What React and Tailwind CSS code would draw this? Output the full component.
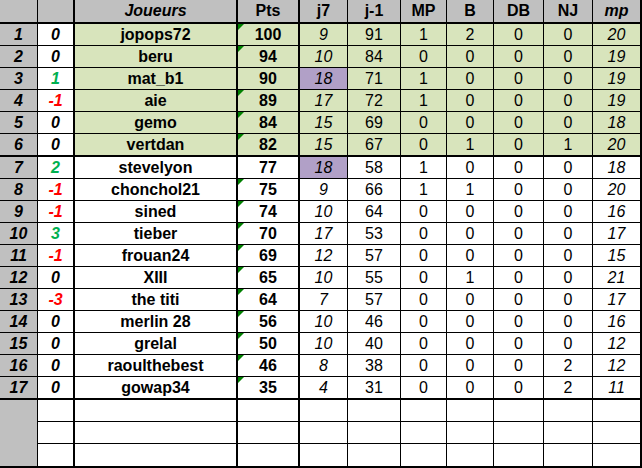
const rows = [
  [1, 0, "jopops72", 100, 9, 91, 1, 2, 0, 0, 20],
  [2, 0, "beru", 94, 10, 84, 0, 0, 0, 0, 19],
  [3, 1, "mat_b1", 90, 18, 71, 1, 0, 0, 0, 19],
  [4, -1, "aie", 89, 17, 72, 1, 0, 0, 0, 19],
  [5, 0, "gemo", 84, 15, 69, 0, 0, 0, 0, 18],
  [6, 0, "vertdan", 82, 15, 67, 0, 1, 0, 1, 20],
  [7, 2, "stevelyon", 77, 18, 58, 1, 0, 0, 0, 18],
  [8, -1, "chonchol21", 75, 9, 66, 1, 1, 0, 0, 20],
  [9, -1, "sined", 74, 10, 64, 0, 0, 0, 0, 16],
  [10, 3, "tieber", 70, 17, 53, 0, 0, 0, 0, 17],
  [11, -1, "frouan24", 69, 12, 57, 0, 0, 0, 0, 15],
  [12, 0, "XIII", 65, 10, 55, 0, 1, 0, 0, 21],
  [13, -3, "the titi", 64, 7, 57, 0, 0, 0, 0, 17],
  [14, 0, "merlin 28", 56, 10, 46, 0, 0, 0, 0, 16],
  [15, 0, "grelal", 50, 10, 40, 0, 0, 0, 0, 12],
  [16, 0, "raoulthebest", 46, 8, 38, 0, 0, 0, 2, 12],
  [17, 0, "gowap34", 35, 4, 31, 0, 0, 0, 2, 11],
];

// column widths include the right border
const cols = [
  "w-[38px] border-r",
  "w-[37px] border-r-2",
  "w-[163px] border-r-2",
  "w-[62px] border-r-2",
  "w-[48px] border-r",
  "w-[53px] border-r",
  "w-[46px] border-r",
  "w-[47px] border-r",
  "w-[50px] border-r",
  "w-[49px] border-r",
  "w-[49px] border-r-2",
];

const noFlag = [3, 7];
const purple = [3, 7];

function Cell({ i, className = "", children }) {
  return (
    <div className={`${cols[i]} relative flex shrink-0 items-center justify-center border-black ${className}`}>
      {children}
    </div>
  );
}

function rowHeight(n) {
  if (n === 6 || n === 17) return "h-[23px] border-b-2";
  return "h-[22px] border-b";
}

function moveColor(v) {
  if (v > 0) return "text-[#00b050]";
  if (v < 0) return "text-[#ff0000]";
  return "text-black";
}

export default function App() {
  return (
    <div className="w-[642px] h-[468px] overflow-hidden bg-white text-[16px] leading-none text-black" style={{ fontFamily: '"Liberation Sans", Arial, sans-serif' }}>
      <div className="flex h-[24px] border-b-2 border-black bg-[#c0c0c0] font-bold">
        <Cell i={0} />
        <Cell i={1} />
        <Cell i={2} className="italic">Joueurs</Cell>
        <Cell i={3}>Pts</Cell>
        <Cell i={4}>j7</Cell>
        <Cell i={5}>j-1</Cell>
        <Cell i={6}>MP</Cell>
        <Cell i={7}>B</Cell>
        <Cell i={8}>DB</Cell>
        <Cell i={9}>NJ</Cell>
        <Cell i={10} className="italic">mp</Cell>
      </div>

      {rows.map((r) => {
        const [n, mv, name, pts, j7, j1, mp, b, db, nj, mpp] = r;
        const fill = n <= 6 ? "bg-[#d8e4bc]" : "bg-white";
        return (
          <div key={n} className={`flex border-black ${rowHeight(n)}`}>
            <Cell i={0} className="bg-[#c0c0c0] font-bold italic">{n}</Cell>
            <Cell i={1} className={`bg-white font-bold italic ${moveColor(mv)}`}>{mv}</Cell>
            <Cell i={2} className={`${fill} font-bold`}>{name}</Cell>
            <Cell i={3} className={`${fill} font-bold`}>
              {!noFlag.includes(n) && (
                <span className="absolute left-0 top-0 h-0 w-0 border-t-[6px] border-r-[6px] border-t-[#008000] border-r-transparent" />
              )}
              {pts}
            </Cell>
            <Cell i={4} className={`${purple.includes(n) ? "bg-[#b1a0c7]" : fill} italic`}>{j7}</Cell>
            <Cell i={5} className={fill}>{j1}</Cell>
            <Cell i={6} className={fill}>{mp}</Cell>
            <Cell i={7} className={fill}>{b}</Cell>
            <Cell i={8} className={fill}>{db}</Cell>
            <Cell i={9} className={fill}>{nj}</Cell>
            <Cell i={10} className={`${fill} italic`}>{mpp}</Cell>
          </div>
        );
      })}

      {[18, 19, 20].map((n) => (
        <div key={n} className={`flex ${n === 20 ? "h-[24px] border-b-2 border-black" : "h-[22px]"}`}>
          <Cell i={0} className="bg-[#c0c0c0]" />
          {[1, 2, 3, 4, 5, 6, 7, 8, 9, 10].map((i) => (
            <Cell key={i} i={i} className={n === 20 ? "" : "border-b"} />
          ))}
        </div>
      ))}
    </div>
  );
}
